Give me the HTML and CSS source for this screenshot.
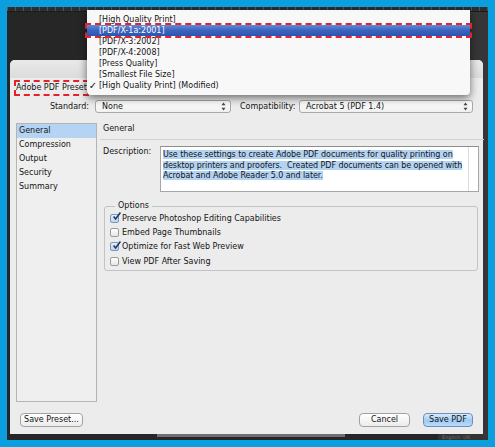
FILE: index.html
```html
<!DOCTYPE html>
<html lang="en">
<head>
    <meta charset="UTF-8">
    <meta name="viewport" content="width=device-width, initial-scale=1.0">
    <title>Save Adobe PDF</title>
    <link rel="stylesheet" href="styles.css">
</head>
<body>
    <div class="screen">
        <div class="ruler"></div>

        <div class="dialog">
            <div class="titlebar"></div>
            <div class="body">
                <div class="preset-row">
                    <span class="preset-label">Adobe PDF Preset</span>
                </div>

                <div class="standard-row">
                    <label class="field-label standard-label">Standard:</label>
                    <div class="select standard-select">
                        <span>None</span>
                        <svg class="updown" width="5" height="9" viewBox="0 0 5 9"><path d="M2.5 0.5 L4.5 3.3 H0.5 Z M2.5 8.5 L4.5 5.7 H0.5 Z" fill="#444"/></svg>
                    </div>
                    <label class="field-label compat-label">Compatibility:</label>
                    <div class="select compat-select">
                        <span>Acrobat 5 (PDF 1.4)</span>
                        <svg class="updown" width="5" height="9" viewBox="0 0 5 9"><path d="M2.5 0.5 L4.5 3.3 H0.5 Z M2.5 8.5 L4.5 5.7 H0.5 Z" fill="#444"/></svg>
                    </div>
                </div>

                <div class="main">
                    <ul class="sections">
                        <li class="is-selected">General</li>
                        <li>Compression</li>
                        <li>Output</li>
                        <li>Security</li>
                        <li>Summary</li>
                    </ul>

                    <div class="panel">
                        <div class="panel-title">General</div>

                        <div class="desc-row">
                            <span class="desc-label">Description:</span>
                            <div class="desc-box">
                                <p class="desc-text"><span class="sel">Use these settings to create Adobe PDF documents for quality printing on<br>desktop printers and proofers.&nbsp; Created PDF documents can be opened with<br>Acrobat and Adobe Reader 5.0 and later.</span></p>
                                <div class="scroll-track"></div>
                            </div>
                        </div>

                        <fieldset class="options">
                            <legend>Options</legend>
                            <div class="check-row">
                                <span class="box is-checked"><svg width="9" height="9" viewBox="0 0 9 9"><path d="M1.6 4.6 L3.6 7 L8.4 0.6" fill="none" stroke="#1d3b6e" stroke-width="1.6"/></svg></span>
                                Preserve Photoshop Editing Capabilities
                            </div>
                            <div class="check-row">
                                <span class="box"></span>
                                Embed Page Thumbnails
                            </div>
                            <div class="check-row">
                                <span class="box is-checked"><svg width="9" height="9" viewBox="0 0 9 9"><path d="M1.6 4.6 L3.6 7 L8.4 0.6" fill="none" stroke="#1d3b6e" stroke-width="1.6"/></svg></span>
                                Optimize for Fast Web Preview
                            </div>
                            <div class="check-row">
                                <span class="box"></span>
                                View PDF After Saving
                            </div>
                        </fieldset>
                    </div>
                </div>

                <div class="footer">
                    <button class="btn save-preset">Save Preset...</button>
                    <div class="footer-right">
                        <button class="btn cancel">Cancel</button>
                        <button class="btn primary">Save PDF</button>
                    </div>
                </div>
            </div>
        </div>

        <div class="dock">
            <div class="dock-bar"></div>
            <div class="dock-lang">English: UK</div>
        </div>

        <!-- open preset popup, drawn over the dialog -->
        <ul class="menu">
            <li><span class="mark"></span>[High Quality Print]</li>
            <li class="is-hot"><span class="mark"></span>[PDF/X-1a:2001]</li>
            <li><span class="mark"></span>[PDF/X-3:2002]</li>
            <li><span class="mark"></span>[PDF/X-4:2008]</li>
            <li><span class="mark"></span>[Press Quality]</li>
            <li><span class="mark"></span>[Smallest File Size]</li>
            <li><span class="mark">✓</span>[High Quality Print] (Modified)</li>
        </ul>
    </div>
</body>
</html>
```

FILE: styles.css
```css
body {
    margin: 0;
    background: #0c9fe0;
    font-family: "DejaVu Sans", Verdana, sans-serif;
    font-size: 8px;
    color: #141414;
}
.screen {
    margin: 7px;
    height: 433px;
    position: relative;
    overflow: hidden;
    background: linear-gradient(to right, #262626 0, #262626 463px, #363636 463px);
}
.ruler {
    height: 4px;
    background: repeating-linear-gradient(to right, #555 0, #555 1px, #2e2e2e 1px, #2e2e2e 8px);
    border-bottom: 1px solid #1c1c1c;
}
.dialog {
    margin: 48px 5px 0 3px;
    height: 374px;
    background: #ececec;
    border-radius: 5px 5px 0 0;
    display: flex;
    flex-direction: column;
}
.titlebar {
    height: 18px;
    border-radius: 5px 5px 0 0;
    background: linear-gradient(#e9e9e9, #dcdcdc);
}
.body {
    flex: 1;
    padding: 0 5px 0 6px;
    display: flex;
    flex-direction: column;
}
.preset-row {
    margin-top: 2px;
    height: 16px;
    display: flex;
}
.preset-label {
    margin-left: -2px;
    width: 75px;
    height: 16px;
    box-sizing: border-box;
    border: 2px dashed #e3232b;
    line-height: 12px;
    white-space: nowrap;
    overflow: hidden;
}
.standard-row {
    margin-top: 4px;
    height: 13px;
    display: flex;
    align-items: center;
}
.field-label {
    text-align: right;
    white-space: nowrap;
}
.standard-label {
    width: 73px;
}
.compat-label {
    width: 55px;
    margin-left: 9px;
}
.select {
    height: 13px;
    box-sizing: border-box;
    margin-left: 6px;
    padding: 0 4px 0 6px;
    border: 1px solid #a9a9a9;
    border-radius: 3px;
    background: linear-gradient(#ffffff, #f0f0f0);
    display: flex;
    align-items: center;
    justify-content: space-between;
    line-height: 11px;
}
.standard-select {
    width: 136px;
}
.compat-select {
    width: 174px;
    margin-left: 4px;
}
.main {
    margin-top: 10px;
    height: 279px;
    display: grid;
    grid-template-columns: 81px 1fr;
    gap: 3px;
}
.sections {
    margin: 0;
    padding: 0;
    list-style: none;
    border: 1px solid #b4b4b4;
    background: #efefef;
}
.sections li {
    height: 14px;
    line-height: 14px;
    padding-left: 2px;
}
.sections .is-selected {
    background: #b5d4f3;
}
.panel {
    display: flex;
    flex-direction: column;
}
.panel-title {
    height: 16px;
    line-height: 12px;
    padding-left: 3px;
    margin-right: -5px;
    border-bottom: 1px solid #d2d2d2;
}
.desc-row {
    margin-top: 6px;
    display: flex;
}
.desc-label {
    width: 57px;
    padding-left: 3px;
    line-height: 12px;
}
.desc-box {
    width: 319px;
    height: 46px;
    box-sizing: border-box;
    border: 1px solid #a6a6a6;
    border-top-color: #8e8e8e;
    background: #fff;
    display: flex;
}
.desc-text {
    flex: 1;
    margin: 0;
    padding: 3px 0 0 2px;
    line-height: 10.5px;
    white-space: nowrap;
    letter-spacing: -0.08px;
}
.sel {
    background: #b3d3f3;
}
.scroll-track {
    width: 9px;
    border-left: 1px solid #dcdcdc;
}
.options {
    margin: 9px 0 0 4px;
    width: 374px;
    height: 70px;
    box-sizing: border-box;
    padding: 0 0 0 5px;
    border: 1px solid #c3c3c3;
    border-radius: 3px;
}
.options legend {
    padding: 0 3px;
    margin-left: 5px;
    line-height: 10px;
}
.check-row {
    height: 14.3px;
    display: flex;
    align-items: center;
    gap: 3px;
}
.box {
    width: 9px;
    height: 9px;
    box-sizing: border-box;
    border: 1px solid #9b9b9b;
    border-radius: 2px;
    background: linear-gradient(#ffffff, #e6e6e6);
    display: flex;
    align-items: center;
    justify-content: center;
}
.box.is-checked {
    border-color: #7d95b8;
    background: linear-gradient(#e6eef8, #c2d4ec);
}
.box svg {
    margin: -3px -3px 0 0;
    overflow: visible;
}
.footer {
    margin-top: auto;
    margin-bottom: 7px;
    display: flex;
    justify-content: space-between;
    align-items: center;
}
.footer-right {
    display: flex;
    gap: 13px;
    margin-right: 5px;
}
.btn {
    height: 14px;
    padding: 0;
    font-family: inherit;
    font-size: 8px;
    line-height: 12px;
    color: #141414;
    border: 1px solid #a2a2a2;
    border-radius: 4px;
    background: linear-gradient(#ffffff, #ececec);
}
.save-preset {
    width: 63px;
    margin-left: 4px;
}
.cancel {
    width: 51px;
}
.btn.primary {
    width: 50px;
    border-color: #6a8fc4;
    background: linear-gradient(#d9ebfb, #9fcbf3 55%, #b9dbf8);
}
.dock {
    height: 6px;
    display: flex;
}
.dock-bar {
    margin-left: 150px;
    width: 188px;
    height: 3px;
    background: #707070;
}
.dock-lang {
    margin-left: 93px;
    width: 45px;
    padding-left: 4px;
    box-sizing: border-box;
    background: #333;
    color: #6e6e6e;
    font-size: 5px;
    line-height: 6px;
    white-space: nowrap;
}
.menu {
    position: absolute;
    left: 80px;
    top: 3px;
    width: 383px;
    height: 85px;
    box-sizing: border-box;
    margin: 0;
    padding: 4px 0 0;
    list-style: none;
    background: #f8f8f8;
    border-radius: 0 0 4px 4px;
    box-shadow: 0 3px 9px rgba(0, 0, 0, 0.55);
}
.menu li {
    height: 11px;
    line-height: 11px;
    white-space: nowrap;
}
.menu .mark {
    display: inline-block;
    width: 12px;
    text-align: center;
    font-size: 10px;
    vertical-align: top;
}
.menu .is-hot {
    color: #fff;
    background: linear-gradient(#6389d6, #3a63bd 50%, #2a55b2);
    outline: 2px dashed #e3232b;
    outline-offset: 0;
}
```
